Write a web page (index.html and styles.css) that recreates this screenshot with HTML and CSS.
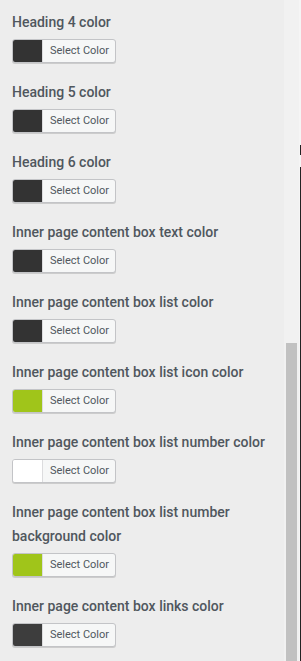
FILE: index.html
```html
<!doctype html>
<html>
<head>
<meta charset="utf-8">
<title>Colors</title>
<link rel="stylesheet" href="styles.css">
</head>
<body>
<div class="wrap">
	<div class="panel">
		<div class="field">
			<label>Heading 4 color</label>
			<a href="javascript:;" class="color_btn"><span class="swatch dark"></span><span class="txt">Select Color</span></a>
		</div>
		<div class="field">
			<label>Heading 5 color</label>
			<a href="javascript:;" class="color_btn"><span class="swatch dark"></span><span class="txt">Select Color</span></a>
		</div>
		<div class="field">
			<label>Heading 6 color</label>
			<a href="javascript:;" class="color_btn"><span class="swatch dark"></span><span class="txt">Select Color</span></a>
		</div>
		<div class="field">
			<label>Inner page content box text color</label>
			<a href="javascript:;" class="color_btn"><span class="swatch dark"></span><span class="txt">Select Color</span></a>
		</div>
		<div class="field">
			<label>Inner page content box list color</label>
			<a href="javascript:;" class="color_btn"><span class="swatch dark"></span><span class="txt">Select Color</span></a>
		</div>
		<div class="field">
			<label>Inner page content box list icon color</label>
			<a href="javascript:;" class="color_btn"><span class="swatch green"></span><span class="txt">Select Color</span></a>
		</div>
		<div class="field">
			<label>Inner page content box list number color</label>
			<a href="javascript:;" class="color_btn"><span class="swatch white"></span><span class="txt">Select Color</span></a>
		</div>
		<div class="field">
			<label>Inner page content box list number background color</label>
			<a href="javascript:;" class="color_btn"><span class="swatch green"></span><span class="txt">Select Color</span></a>
		</div>
		<div class="field">
			<label>Inner page content box links color</label>
			<a href="javascript:;" class="color_btn"><span class="swatch grey"></span><span class="txt">Select Color</span></a>
		</div>
	</div>
	<div class="scrollbar"><div class="thumb"></div></div>
	<div class="edge"><i class="e1"></i><i class="e2"></i><i class="e3"></i></div>
</div>
</body>
</html>
```
FILE: styles.css
```css
*{ margin:0; padding:0; box-sizing:border-box;}
html,body{ height:100%; overflow:hidden;}
body{ background:#ededed; font-family:Roboto,"Liberation Sans",Arial,sans-serif;}
.wrap{ display:flex; height:661px;}

.panel{ flex:1; padding:10px 4px 0 12px; }
.field{ margin-bottom:17px;}
.field label{ display:block; font-size:14px; line-height:24px; font-weight:500; color:#50575e; margin-bottom:5px;}

.color_btn{ display:flex; width:104px; height:24px; border:1px solid #c3c4c7; border-radius:3px; background:#f6f7f7; box-shadow:0 1px 0 #ccc; overflow:hidden; text-decoration:none;}
.swatch{ width:30px; height:100%; border-right:1px solid #dcdcde;}
.dark{ background:#333;}
.grey{ background:#3d3d3d;}
.green{ background:#a0c51a;}
.white{ background:#fff;}
.txt{ flex:1; font-size:11px; line-height:22px; color:#50575e; text-align:center; padding-left:1px;}

.scrollbar{ width:15px; background:#f1f1f1; padding:343px 2px 0 2px;}
.thumb{ height:100%; background:#c1c1c1;}

.edge{ width:2px; display:flex; flex-direction:column; background:#f5f5f5; align-items:flex-end;}
.edge i{ display:block; width:1px;}
.e1{ height:145px;}
.e2{ height:10px; background:#222;}
.e3{ height:12px;}
.edge::after{ content:""; flex:1; width:1px; background:#222;}
```
